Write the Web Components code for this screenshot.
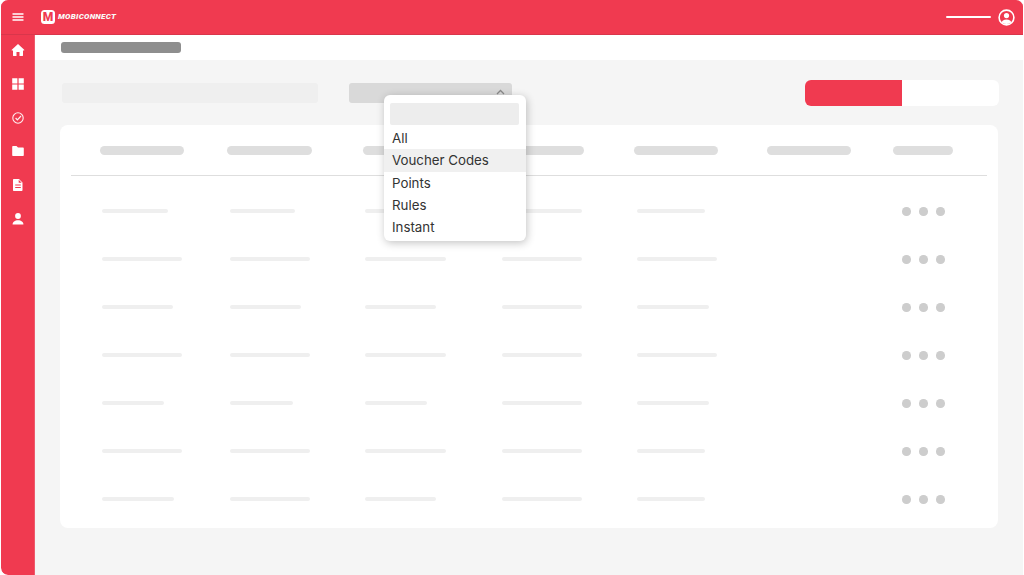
<!DOCTYPE html>
<html lang="en">
<head>
<meta charset="utf-8">
<title>MobiConnect</title>
<style>
html,body{margin:0;padding:0;background:#fff;height:100%;overflow:hidden}
body{padding:0 1px;box-sizing:border-box;font-family:"Inter","Noto Sans",sans-serif}
</style>
</head>
<body>
<app-shell>
  <top-bar slot="top"></top-bar>
  <side-nav slot="side"></side-nav>
  <crumb-bar slot="main"></crumb-bar>
  <filter-row slot="main">
    <drop-menu></drop-menu>
  </filter-row>
  <data-table slot="main"></data-table>
</app-shell>
<script>
const RED='#f03a50';
function def(name,html,setup){
  customElements.define(name,class extends HTMLElement{
    constructor(){super();this.attachShadow({mode:'open'}).innerHTML=html;if(setup)setup(this.shadowRoot);}
  });
}
def('app-shell',`<style>
:host{display:grid;grid-template-columns:34px 1fr;grid-template-rows:34px 541px;height:575px;border-radius:7px 7px 0 7px;overflow:hidden;background:#f5f5f5}
.t{grid-column:1/3}
.m{display:flex;flex-direction:column;min-width:0;position:relative}
</style><div class="t"><slot name="top"></slot></div><div><slot name="side"></slot></div><div class="m"><slot name="main"></slot></div>`);

def('top-bar',`<style>
:host{display:flex;align-items:center;height:34px;background:${RED};box-shadow:0 1px 0 #d9364b;position:relative;z-index:2}
svg{display:block}
.menu{margin-left:11px}
.logo{display:flex;align-items:center;margin-left:17px}
.mark{width:14px;height:14px;border-radius:3.5px;background:#fff;color:${RED};font:900 12px/14px "Roboto","Liberation Sans",sans-serif;text-align:center}
.name{margin-left:3px;color:#f9f9f9;font:italic 900 8px/14px "Roboto","Liberation Sans",sans-serif;letter-spacing:.28px}
.line{margin-left:auto;width:45px;height:2px;background:#fff;border-radius:1px}
.user{margin:0 8px 0 7px}
</style>
<svg class="menu" width="12" height="8" viewBox="0 0 12 8"><path d="M1 1h10M1 4h10M1 7h10" stroke="#fff" stroke-width="1.4" stroke-linecap="round"/></svg>
<div class="logo"><div class="mark">M</div><div class="name">MOBICONNECT</div></div>
<div class="line"></div>
<svg class="user" width="17" height="17" viewBox="0 0 17 17"><defs><clipPath id="c"><circle cx="8.5" cy="8.5" r="6.6"/></clipPath></defs><circle cx="8.5" cy="8.5" r="7.4" fill="none" stroke="#fff" stroke-width="1.6"/><g clip-path="url(#c)" fill="#fff"><circle cx="8.5" cy="6.6" r="2.6"/><ellipse cx="8.5" cy="14" rx="5" ry="3.6"/></g></svg>`);

const icons=[
 '<path d="M7 1 .8 6.8c-.3.3-.1.7.3.7H2v5c0 .3.2.5.5.5H5.500V9h3v4h3c.3 0 .5-.2.5-.5v-5h.9c.4 0 .6-.4.3-.7z" fill="#fff"/>',
 '<path d="M1.200 1.200h5.200v5.200H1.200zM7.600 1.200h5.200v5.200H7.600zM1.200 7.600h5.200v5.200H1.200zM7.600 7.600h5.200v5.200H7.600z" fill="#fff"/>',
 '<circle cx="7" cy="7" r="5.200" fill="none" stroke="#fff" stroke-opacity=".92" stroke-width="1.100"/><path d="M4.600 7l1.800 1.900 3.600-3.900" fill="none" stroke="#fff" stroke-opacity=".92" stroke-width="1.200"/>',
 '<path d="M1.200 3c0-.6.400-1 1-1h3.300l1.500 1.500h4.800c.6 0 1 .4 1 1v6.500c0 .6-.4 1-1 1H2.200c-.6 0-1-.4-1-1z" fill="#fff"/>',
 '<path fill-rule="evenodd" d="M3 1h5l3.500 3.500V12c0 .6-.4 1-1 1H3c-.6 0-1-.4-1-1V2c0-.6.400-1 1-1zM4.200 6.500v1h5.600v-1zM4.200 9v1h5.600V9zM7.700 1.800v3h3z" fill="#fff"/>',
 '<circle cx="7" cy="4" r="2.900" fill="#fff"/><path d="M1.600 12.500c0-2.700 2.200-4.300 5.400-4.300s5.400 1.600 5.400 4.300z" fill="#fff"/>'
];
def('side-nav',`<style>
:host{display:flex;flex-direction:column;align-items:center;box-sizing:border-box;height:541px;background:${RED};padding-top:9px;border-right:1px solid #ee5a6c;border-radius:0 0 0 7px;gap:19.800px}
svg{display:block;width:14px;height:14px}
</style>${icons.map(i=>`<svg viewBox="0 0 14 14">${i}</svg>`).join('')}`);

def('crumb-bar',`<style>
:host{display:flex;align-items:center;height:26px;background:#fff;padding-left:26px}
i{display:block;width:120px;height:11px;border-radius:3px;background:#8e8e8e}
</style><i></i>`);

def('filter-row',`<style>
:host{display:flex;align-items:flex-start;position:relative;height:65px;box-sizing:border-box;padding:20px 24px 0 27px}
.search{margin-top:3px;width:256px;height:20px;background:#efefef;border-radius:3px}
.select{margin:3px 0 0 31px;width:163px;height:20px;background:#d9d9d9;border-radius:3px;position:relative}
.select svg{position:absolute;right:7px;top:6px}
.toggle{margin-left:auto;display:flex;width:194px;height:26px;background:#fff;border-radius:6px;overflow:hidden}
.toggle b{display:block;width:97px;background:${RED}}
</style>
<div class="search"></div>
<div class="select"><svg width="9" height="6" viewBox="0 0 9 6"><path d="M1 5l3.500-3.500L8 5" fill="none" stroke="#8a8a8a" stroke-width="1.300"/></svg></div>
<div class="toggle"><b></b></div>
<slot></slot>`);

def('drop-menu',`<style>
:host{position:absolute;left:349px;top:35px;width:142px;height:146px;box-sizing:border-box;background:#fff;border-radius:6px;box-shadow:1px 2px 8px rgba(0,0,0,.24);padding:8px 0 0;z-index:5;font:400 13.300px/22.250px "Inter","Noto Sans",sans-serif;color:#333}
.s{height:22px;margin:0 7px 2px 6px;background:#ededed;border-radius:2px}
.o{height:22.250px;padding-left:8px;white-space:nowrap}
.on{background:#f0f0f0}
</style>
<div class="s"></div>
<div class="o">All</div>
<div class="o on">Voucher Codes</div>
<div class="o">Points</div>
<div class="o">Rules</div>
<div class="o">Instant</div>`);

const head=[84,85,85,84,84,84,60];
const rows=[
 [66,65,81,80,68],
 [80,80,81,80,80],
 [71,71,71,80,72],
 [80,80,81,80,80],
 [62,63,62,80,72],
 [80,80,81,80,68],
 [72,80,71,80,68]
];
const cols='127px 136px 137px 134px 133px 126px 93px';
const headH=head.map(w=>`<div class="c"><i class="h" style="width:${w}px"></i></div>`).join('');
const rowH=rows.map(r=>`<div class="r">${r.map(w=>`<div class="c p"><i class="b" style="width:${w}px"></i></div>`).join('')}<div class="c"></div><div class="c"><span class="dots"><u></u><u></u><u></u></span></div></div>`).join('');
def('data-table',`<style>
:host{display:block;box-sizing:border-box;width:938px;height:403px;margin-left:25px;background:#fff;border-radius:8px;padding:0 11px}
.hd,.r{display:grid;grid-template-columns:${cols};padding-left:29px}
.hd{height:50px;border-bottom:1px solid #dedede;padding-top:0;align-items:center;box-sizing:content-box}
.body{padding-top:11px}
.r{height:48px;align-items:center}
.c{display:flex;align-items:center}
.p{padding-left:2px}
.p:nth-child(2),.p:nth-child(5){padding-left:3px}
i{display:block}
.h{height:9px;border-radius:5px;background:#dedede}
.b{height:4px;border-radius:2px;background:#efefef}
.dots{display:flex;gap:8.500px;margin-left:9px;padding-top:1px}
u{display:block;width:8.500px;height:8.500px;border-radius:50%;background:#cdcdcd}
</style><div class="hd">${headH}</div><div class="body">${rowH}</div>`);
</script>
</body>
</html>
